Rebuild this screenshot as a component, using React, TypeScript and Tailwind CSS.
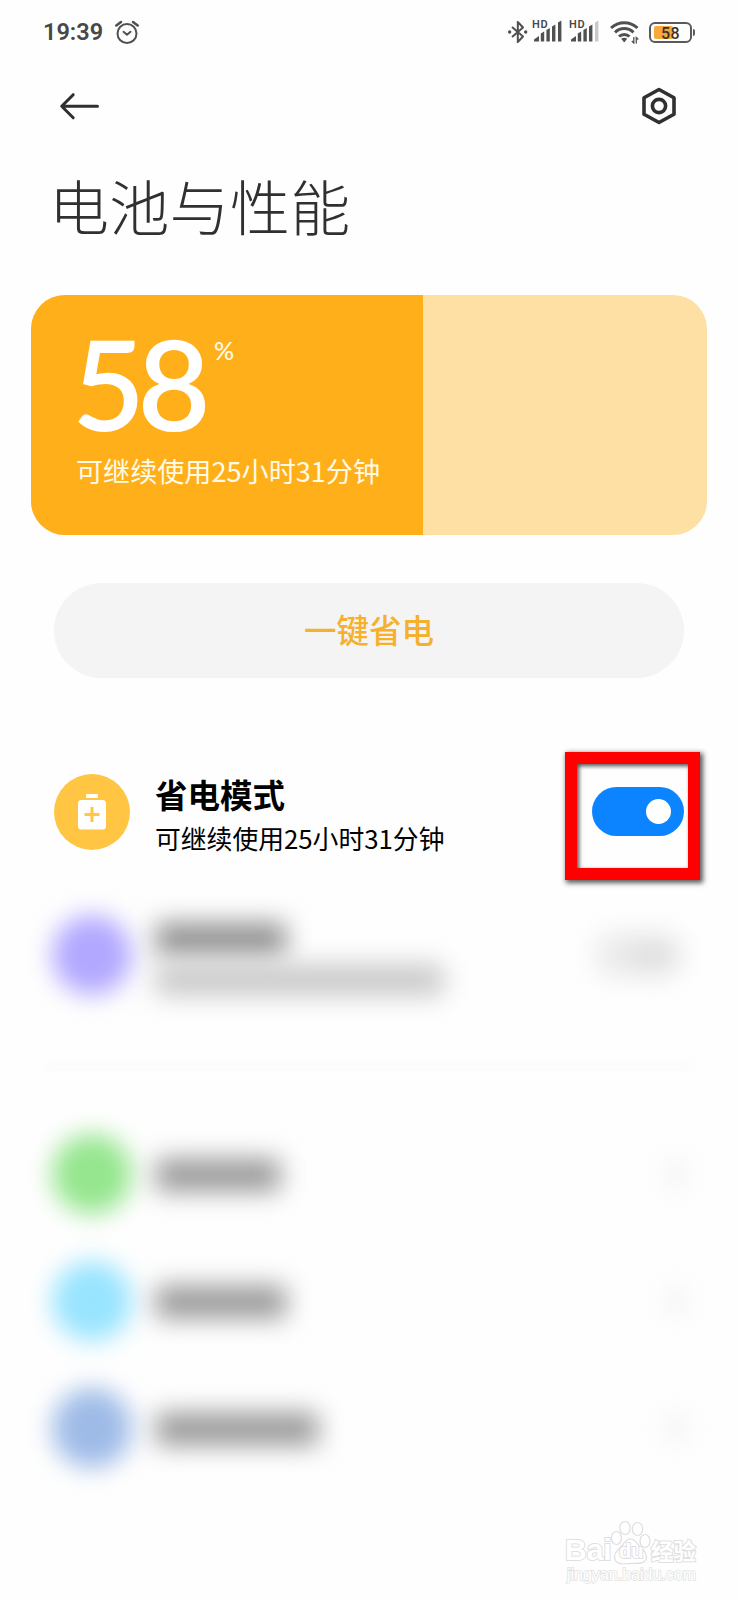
import React from "react";

const cjk = "font-['Noto_Sans_CJK_SC',sans-serif]";

function SignalIcon({ weak = false }: { weak?: boolean }) {
  return (
    <div className="relative h-6 w-[29px]">
      <span className="absolute -left-[2px] top-0 font-['Roboto',sans-serif] text-[11px] font-semibold leading-[10px] tracking-[0.6px]">
        HD
      </span>
      <svg className="h-6 w-[29px]" viewBox="0 0 29 24" fill="#505050">
        <path d="M0 21.500v-2l5-3.500v5.500z" />
        <path d="M6.800 21.500v-8l3.400-2v10z" />
        <path d="M12.400 21.500V10l3.400-2v13.500z" />
        <path d="M18 21.500V6.500l3.400-2v17z" />
        <path d="M24 21.500V2.500l3.400-2v21z" fill={weak ? "#c9c9c9" : "#505050"} />
      </svg>
    </div>
  );
}

function StatusBar() {
  return (
    <div className="flex h-16 items-center pl-[43px] pr-[43px] text-[#484848]">
      <span className="w-[62px] whitespace-nowrap pt-px font-['Roboto',sans-serif] text-[23.500px] font-semibold leading-none">
        19:39
      </span>
      <svg className="ml-[9px] h-6 w-[26px]" viewBox="0 0 26 24" fill="none" stroke="#505050" strokeWidth="2" strokeLinecap="round" strokeLinejoin="round">
        <circle cx="13" cy="13.500" r="9.500" />
        <path d="M9.500 11.800l3.500 3 3.500-3" />
        <path d="M2.300 5.500L7 2M23.700 5.500L19 2" strokeWidth="2.600" />
      </svg>
      <div className="ml-auto flex items-center">
        <svg className="h-6 w-[22px]" viewBox="0 0 22 24" fill="none" stroke="#505050" strokeWidth="2" strokeLinejoin="round">
          <path d="M5 7l11 9.500-5.200 5.500V2l5.200 5.500L5 17" />
          <circle cx="2.600" cy="12" r="1.700" fill="#505050" stroke="none" />
          <circle cx="18.700" cy="12" r="1.700" fill="#505050" stroke="none" />
        </svg>
        <div className="ml-[5px]">
          <SignalIcon />
        </div>
        <div className="ml-2">
          <SignalIcon weak />
        </div>
        <svg className="ml-[10px] h-6 w-[30px]" viewBox="0 0 30 24" fill="none" stroke="#505050" strokeWidth="3">
          <path d="M1 8c7.500-7 19-7 26.500 0" />
          <path d="M5 12.300c5.500-5 13-5 18.500 0" />
          <path d="M9 16.500c3-2.800 7.500-2.800 10.500 0" />
          <path d="M14.200 22.500l-3-3.700c1.800-1.500 4.200-1.500 6 0z" fill="#505050" stroke="none" />
          <path d="M23.800 17v6l-2-2M26.300 23.500v-6l2 2" strokeWidth="1.300" />
        </svg>
        <div className="ml-[9px] flex h-[21px] w-[43px] items-center justify-center rounded-[6px] border-2 border-[#5a5a5a] p-[2px]">
          <div className="relative flex h-full w-full items-center justify-center">
            <div className="absolute inset-y-0 left-px w-[19px] rounded-[2px] bg-[#f6a93a]" />
            <span className="relative pt-[3px] font-['Roboto',sans-serif] text-[16px] font-medium leading-none tracking-[0.5px] text-[#3b3028]">58</span>
          </div>
        </div>
        <div className="ml-px h-[7px] w-[2px] rounded-r-sm bg-[#5a5a5a]" />
      </div>
    </div>
  );
}

function NavBar() {
  return (
    <div className="flex h-[84px] items-center justify-between pl-[58px] pr-[60px]">
      <svg className="h-[30px] w-[42px]" viewBox="0 0 42 30" fill="none" stroke="#2f2f2f" strokeWidth="3" strokeLinecap="round" strokeLinejoin="round">
        <path d="M39.500 15.200H4M15.200 3.700L3.700 15.200l11.500 11.600" />
      </svg>
      <svg className="h-[38px] w-[38px]" viewBox="0 0 38 38" fill="none" stroke="#303030" strokeWidth="3.600" strokeLinejoin="round">
        <path d="M19 2.500l15 8.300v16.400l-15 8.300-15-8.300V10.800z" />
        <circle cx="19" cy="19" r="6.600" />
      </svg>
    </div>
  );
}

function BatteryCard() {
  return (
    <div className="mx-[31px] flex h-[240px] overflow-hidden rounded-[34px] bg-[#fee0a5]">
      <div className="w-[392px] bg-[#ffaf19] pl-[45px] pt-[41px] text-white">
        <div className="flex h-[94px] items-start">
          <span className="-ml-[4px] w-[138px] font-['Lato',sans-serif] text-[126px] font-semibold leading-[94px] tracking-[-7.500px]">58</span>
          <span className="ml-[4px] font-['Lato',sans-serif] text-[25px] font-medium leading-[28px] text-[#fffbe8]">%</span>
        </div>
        <p className="mt-[21px] whitespace-nowrap text-[27.100px] leading-[40px] text-[#fffbe8]">可继续使用25小时31分钟</p>
      </div>
    </div>
  );
}

function BlurredRow({ circle, width }: { circle: string; width: string }) {
  return (
    <div className="flex h-[127px] items-center pl-[54px] pr-[54px]">
      <div className={`h-[80px] w-[80px] -mx-[2px] rounded-full blur-[12px] ${circle}`} />
      <div className={`ml-[26px] mt-[2px] h-[32px] bg-[#969696] blur-[13px] ${width}`} />
      <div className="ml-auto h-[26px] w-4 bg-[#f0f0f0] blur-[12px]" />
    </div>
  );
}

function Watermark() {
  const outline = "text-white [-webkit-text-stroke:2px_#e0e0e0] [paint-order:stroke_fill]";
  return (
    <div className="absolute bottom-0 left-[565px] flex h-[84px] w-[140px] flex-col">
      <div className="flex h-[48px] items-end">
        <span className={`w-[46px] font-['Liberation_Sans',sans-serif] text-[30px] font-bold leading-[28px] ${outline}`}>Bai</span>
        <div className="relative -mb-px h-[46px] w-[40px]">
          <svg className="h-[46px] w-[40px]" viewBox="0 0 40 46" fill="white" stroke="#dedede" strokeWidth="1.200">
            <ellipse cx="5.500" cy="19" rx="5" ry="6.500" />
            <ellipse cx="14" cy="9" rx="5.200" ry="6.500" />
            <ellipse cx="26.500" cy="10" rx="5.200" ry="6.500" />
            <ellipse cx="34" cy="22" rx="5" ry="6.500" />
            <path d="M19.500 20c-5 0-6.500 5-10.500 9-5 4-6.500 7-5 11.500 2 5 8 4.500 15.500 4s13 1 15.500-4c1.500-4.500 0-7.500-5-11.500-4-4-5.500-9-10.500-9z" />
          </svg>
          <span className={`absolute left-[8px] top-[20px] font-['Liberation_Sans',sans-serif] text-[20px] font-bold leading-[24px] ${outline}`}>du</span>
        </div>
        <span className={`whitespace-nowrap text-[22.500px] font-bold leading-[28px] ${outline}`}>经验</span>
      </div>
      <span className="mt-px whitespace-nowrap pl-[2px] font-['Liberation_Sans',sans-serif] text-[16px] leading-[20px] text-white [-webkit-text-stroke:1.500px_#e2e2e2] [paint-order:stroke_fill]">
        jingyan.baidu.com
      </span>
    </div>
  );
}

export default function App() {
  return (
    <main className={`relative h-[1600px] w-[738px] overflow-hidden bg-[#fefefe] ${cjk}`}>
      <StatusBar />
      <NavBar />
      <h1 className="h-[147px] pl-[49px] pt-[15px] text-[60px] font-light leading-[84px] tracking-[0.3px] text-[#303030]">电池与性能</h1>
      <BatteryCard />

      <button className="mx-[54px] mt-[48px] flex h-[95px] w-[630px] items-center justify-center rounded-full bg-[#f4f4f4] pb-[2px] text-[32.500px] font-medium leading-none text-[#f6b02c]">
        一键省电
      </button>

      <section className="mt-[74px] flex h-[128px] items-center pl-[54px] pr-[38px]">
        <div className="mt-[-8px] flex h-[76px] w-[76px] items-center justify-center rounded-full bg-[#ffc543]">
          <svg className="h-[36px] w-[30px]" viewBox="0 0 30 36" fill="white">
            <rect x="9" y="0" width="12" height="4" rx="1" />
            <rect x="1" y="6" width="28" height="29.500" rx="3.500" />
            <path d="M15 13v15M7.500 20.500h15" stroke="#ffc543" strokeWidth="3" />
          </svg>
        </div>
        <div className="ml-[25px] mt-[-3px] text-black">
          <h2 className="text-[32.500px] font-bold leading-[44px]">省电模式</h2>
          <p className="mt-[2px] text-[25.800px] leading-[40px]">可继续使用25小时31分钟</p>
        </div>
        <div className="ml-auto h-[128px] w-[135px] border-[12px] border-[#fe0000] pl-[15px] pt-[23px] shadow-[2px_2px_5px_1px_rgba(0,0,0,0.65),inset_2px_2px_4px_rgba(0,0,0,0.7)]">
          <div className="flex h-[49px] w-[92px] items-center justify-end rounded-full bg-[#0d84ff] pr-[13px]">
            <div className="h-[25px] w-[25px] rounded-full bg-white" />
          </div>
        </div>
      </section>

      <section className="mt-[25px] flex h-[100px] items-center pl-[54px] pr-[54px]">
        <div className="-mx-[2px] h-[80px] w-[80px] rounded-full bg-[#b2a8ff] blur-[12px]" />
        <div className="ml-[26px] pt-[8px]">
          <div className="h-[32px] w-[130px] bg-[#8e8e8e] blur-[13px]" />
          <div className="mt-[10px] h-[30px] w-[287px] bg-[#c6c6c6] blur-[13px]" />
        </div>
        <div className="ml-auto flex h-[46px] w-[90px] items-center justify-end rounded-full bg-[#ebebeb] blur-[12px]">
          <div className="mr-[10px] h-[30px] w-[44px] rounded-full bg-[#e0e0e0]" />
        </div>
      </section>

      <div className="mx-[44px] mt-[60px] h-[4px] bg-[#fafafa] blur-[4px]" />

      <section className="mt-[41px]">
        <BlurredRow circle="bg-[#95e68e]" width="w-[124px]" />
        <BlurredRow circle="bg-[#98e4ff]" width="w-[130px]" />
        <BlurredRow circle="bg-[#9ebbe7]" width="w-[162px]" />
      </section>
      <Watermark />
    </main>
  );
}
